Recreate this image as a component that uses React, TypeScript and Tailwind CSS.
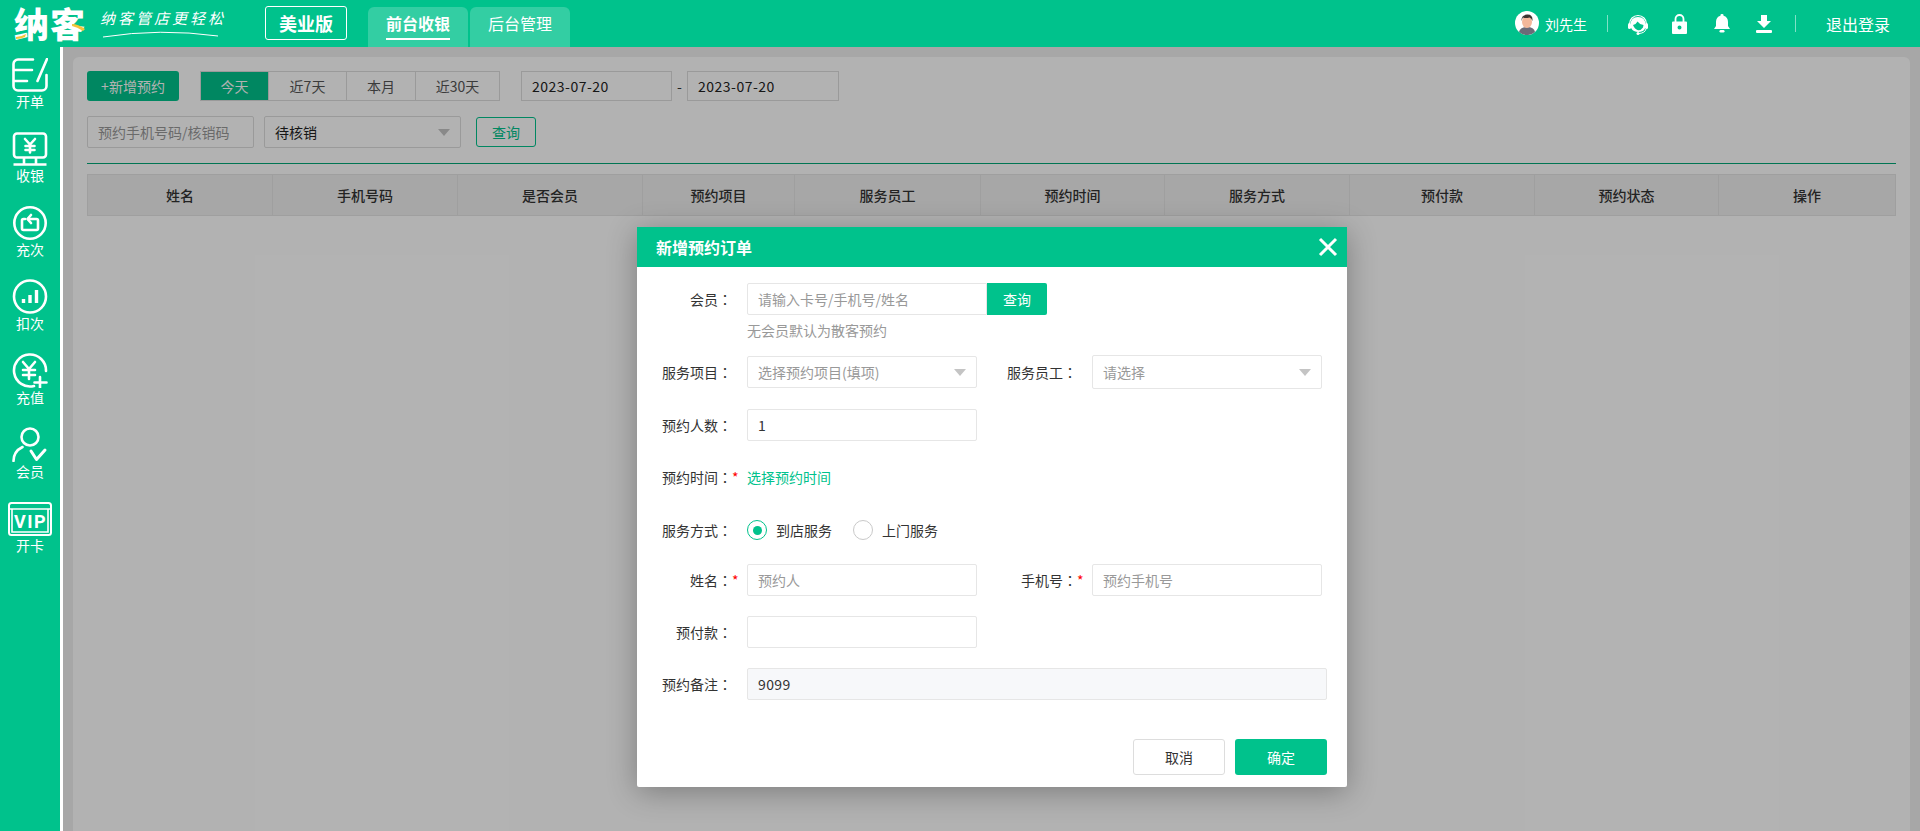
import React from "react";

const columns = [
  { label: "姓名", width: "w-[185px]" },
  { label: "手机号码", width: "w-[185px]" },
  { label: "是否会员", width: "w-[185px]" },
  { label: "预约项目", width: "w-[152px]" },
  { label: "服务员工", width: "w-[186px]" },
  { label: "预约时间", width: "w-[184px]" },
  { label: "服务方式", width: "w-[185px]" },
  { label: "预付款", width: "w-[185px]" },
  { label: "预约状态", width: "w-[184px]" },
  { label: "操作", width: "w-[176px]" },
];

const ranges = [
  { label: "今天", width: "w-[68px]", active: true },
  { label: "近7天", width: "w-[78px]", active: false },
  { label: "本月", width: "w-[69px]", active: false },
  { label: "近30天", width: "w-[83px]", active: false },
];

const Stroke = ({ w, h, children }: { w: number; h: number; children: React.ReactNode }) => (
  <svg width={w} height={h} viewBox={`0 0 ${w} ${h}`} fill="none" stroke="#fff" strokeWidth="2.6" strokeLinecap="round" strokeLinejoin="round" className="shrink-0">
    {children}
  </svg>
);

const navItems: { label: string; icon: React.ReactNode }[] = [
  {
    label: "开单",
    icon: (
      <Stroke w={36} h={34}>
        <path d="M21 1.500H6a4.500 4.500 0 0 0-4.500 4.500v22a4.500 4.500 0 0 0 4.500 4.500h24a4.500 4.500 0 0 0 4.500-4.500V17" />
        <path d="M2 12h18M2 23h13M35 1 25.500 23" />
      </Stroke>
    ),
  },
  {
    label: "收银",
    icon: (
      <Stroke w={36} h={34}>
        <rect x="2" y="1.500" width="32" height="24" rx="3" />
        <path d="M13 7l5 5.500 5-5.500M18 12.500v8M13.500 14h9M13.500 18h9" />
        <path d="M12 26v6M24 26v6M1.500 32.500h33" strokeLinecap="butt" />
      </Stroke>
    ),
  },
  {
    label: "充次",
    icon: (
      <Stroke w={36} h={34}>
        <circle cx="18" cy="17" r="15.700" />
        <path d="M13 13h-1.500a1.500 1.500 0 0 0-1.500 1.500v8a1.500 1.500 0 0 0 1.500 1.500h13a1.500 1.500 0 0 0 1.500-1.500v-8a1.500 1.500 0 0 0-1.500-1.500H16" />
        <path d="M19 9l-3.500 4 3.500 4" />
      </Stroke>
    ),
  },
  {
    label: "扣次",
    icon: (
      <Stroke w={36} h={35}>
        <circle cx="18" cy="17.500" r="16" />
        <path d="M11.500 20v4M18 16v8M24.500 11v13" strokeWidth="3.400" strokeLinecap="butt" />
      </Stroke>
    ),
  },
  {
    label: "充值",
    icon: (
      <Stroke w={36} h={35}>
        <path d="M22 33a16 16 0 1 1 12-15" />
        <path d="M11 9l6 7 6-7M17 16v10M11 17h12M11 22h12" />
        <path d="M28 24v11M22.500 29.500h12" />
      </Stroke>
    ),
  },
  {
    label: "会员",
    icon: (
      <Stroke w={36} h={35}>
        <circle cx="18" cy="10" r="8.500" />
        <path d="M1.500 34c0-6 3-11 9-14" />
        <path d="M19 24l5.500 8.500L33 23" strokeWidth="3" />
      </Stroke>
    ),
  },
  {
    label: "开卡",
    icon: (
      <svg width="44" height="34" viewBox="0 0 44 34" fill="none" className="shrink-0">
        <rect x="1" y="1" width="42" height="32" rx="2.500" stroke="#fff" strokeWidth="2" />
        <path d="M1 7h42M4 7v23h36V7" stroke="#fff" strokeWidth="1.600" />
        <text x="22.500" y="26" textAnchor="middle" fill="#fff" fontSize="18" fontWeight="700" letterSpacing="1.500" fontFamily="Roboto, sans-serif">VIP</text>
      </svg>
    ),
  },
];

const Triangle = () => (
  <span className="h-0 w-0 border-x-[6px] border-t-[7px] border-x-transparent border-t-[#c4c4c4]" />
);

const Label = ({ text, wide }: { text: string; wide?: boolean }) => (
  <span className={`shrink-0 text-right text-sm text-[#333] ${wide ? "w-[100px]" : "w-[95px]"}`}>
    {text}
    <span className="font-['Noto_Sans_CJK_TC',sans-serif]">：</span>
  </span>
);

const Field = ({ label, star, children, wide }: { label: string; star?: boolean; children: React.ReactNode; wide?: boolean }) => (
  <div className="flex items-center">
    <Label text={label} wide={wide} />
    <span className="w-[15px] shrink-0 text-sm leading-none text-[#f00]">{star ? "*" : ""}</span>
    {children}
  </div>
);

const inputBase = "h-[32px] shrink-0 rounded-[2px] border border-[#e6e6e6] px-[10px] text-sm text-[#333] outline-none placeholder:text-[#999]";

export default function App() {
  return (
    <div className="relative flex h-screen w-full flex-col overflow-hidden bg-white font-['Noto_Sans_CJK_SC','Liberation_Sans',sans-serif] text-[#333]">
      {/* top bar */}
      <header className="flex h-[47px] shrink-0 bg-[#00c28c] text-white">
        <div className="relative ml-[14px] mt-[3px] h-[40px] w-[76px] whitespace-nowrap text-[35px] font-black leading-[40px] tracking-[1px]">
          纳客
          <svg width="12" height="6" viewBox="0 0 12 6" className="absolute left-[2px] top-[30px]">
            <path d="M0 4q5 0 10-3l-1 3q-4 2-9 2z" fill="#f5c53a" />
          </svg>
          <svg width="14" height="8" viewBox="0 0 14 8" className="absolute left-[58px] top-[20px]">
            <path d="M0 1q6 0 13 5l-2 2Q5 4 0 3z" fill="#f5c53a" />
          </svg>
        </div>
        <div className="relative ml-[10px] mt-[8px] h-[32px] w-[126px]">
          <div className="whitespace-nowrap text-[15px] italic leading-[20px] tracking-[3px]">纳客管店更轻松</div>
          <svg width="126" height="14" viewBox="0 0 126 14" fill="none" className="absolute left-0 top-[19px]">
            <path d="M3 10Q60 1 118 9" stroke="#fff" strokeWidth="1" />
          </svg>
        </div>
        <div className="ml-[39px] mt-[6px] flex h-[34px] w-[82px] items-center justify-center rounded-[3px] border border-white text-[18px] font-bold">美业版</div>
        <nav className="ml-[21px] mt-[7px] flex gap-[2px]">
          <div className="flex h-[40px] w-[100px] justify-center rounded-t-[6px] bg-white/20">
            <span className="h-[33px] border-b-2 border-white text-base font-bold leading-[32px]">前台收银</span>
          </div>
          <div className="flex h-[40px] w-[100px] justify-center rounded-t-[6px] bg-white/20">
            <span className="text-base leading-[32px]">后台管理</span>
          </div>
        </nav>
        <div className="ml-auto flex items-center pr-[30px]">
          <svg width="24" height="24" viewBox="0 0 24 24" className="mb-[2px]">
            <circle cx="12" cy="12" r="12" fill="#fff" />
            <path d="M4 21q1-5 8-5t8 5a12 12 0 0 1-16 0z" fill="#6b6b78" />
            <ellipse cx="12" cy="11" rx="5" ry="6" fill="#f3b79a" />
            <path d="M6.500 10q-.5-6 5.500-6.500t5.500 6.500q-1-3-3-3.500-4 1-6.500 0-1 1-1.500 3.500z" fill="#3c3531" />
          </svg>
          <span className="ml-[6px] text-sm">刘先生</span>
          <span className="ml-[20px] h-[17px] w-px bg-white/50" />
          <svg width="20" height="22" viewBox="0 0 20 22" className="ml-[20px]">
            <path d="M1.500 11a8.500 8.500 0 0 1 17 0" fill="none" stroke="#fff" strokeWidth="1.200" />
            <path d="M2.500 12q0-8 7.500-8t7.500 8q0 4-2.500 6-5 2-9 0-3.500-2-3.500-6z" fill="#fff" />
            <path d="M5 12q3-.5 4.500-3.500 2 3 6 3.500l-.5 2.500q-2.500 3.500-5.500 2.500-3-1-4.500-5z" fill="#00c28c" />
            <rect x="0" y="10" width="3" height="6" rx="1.500" fill="#fff" />
            <rect x="17" y="10" width="3" height="6" rx="1.500" fill="#fff" />
            <path d="M18 16q-1 4-7 4.500" fill="none" stroke="#fff" strokeWidth="1" />
            <circle cx="10" cy="20.500" r="1.500" fill="#fff" />
          </svg>
          <svg width="15" height="20" viewBox="0 0 15 20" className="ml-[24px]">
            <path d="M3.500 9V5a4 4 0 0 1 8 0v4" fill="none" stroke="#fff" strokeWidth="1.800" />
            <path fillRule="evenodd" d="M1 7.500h13a1 1 0 0 1 1 1V19a1 1 0 0 1-1 1H1a1 1 0 0 1-1-1V8.500a1 1 0 0 1 1-1zM7.500 11.500a2 2 0 1 0 0 4 2 2 0 0 0 0-4z" fill="#fff" />
          </svg>
          <svg width="16" height="19" viewBox="0 0 16 19" className="ml-[27px]">
            <path d="M8 0a1.500 1.500 0 0 1 1.500 1.800Q14 3 14 8v4l2 3H0l2-3V8q0-5 4.500-6.200A1.500 1.500 0 0 1 8 0z" fill="#fff" />
            <rect x="5.500" y="16" width="5" height="2.500" rx="1.200" fill="#fff" />
          </svg>
          <svg width="16" height="18" viewBox="0 0 16 18" className="ml-[26px]">
            <path d="M5 0h6v6h4l-7 7-7-7h4z" fill="#fff" />
            <rect x="0" y="15" width="16" height="3" rx="1" fill="#fff" />
          </svg>
          <span className="ml-[23px] h-[17px] w-px bg-white/50" />
          <span className="ml-[30px] text-base">退出登录</span>
        </div>
      </header>

      <div className="flex min-h-0 flex-1">
        {/* sidebar */}
        <aside className="flex w-[60px] shrink-0 flex-col items-center bg-[#00c28c] pt-[11px] text-white">
          {navItems.map((item) => (
            <div key={item.label} className="flex h-[74px] w-full flex-col items-center">
              <div className="flex h-[34px] items-end justify-center">{item.icon}</div>
              <span className="text-sm leading-[18px]">{item.label}</span>
            </div>
          ))}
        </aside>

        {/* main */}
        <main className="ml-[3px] min-w-0 flex-1 bg-[#f0f0f0] pl-[10px] pr-[10px] pt-[10px]">
          <div className="h-full rounded-t-[6px] bg-white p-[14px]">
            <div className="flex items-center">
              <button className="h-[30px] w-[92px] rounded-[3px] bg-[#00c28c] text-sm text-white">+新增预约</button>
              <div className="ml-[21px] flex h-[30px] border border-[#ddd] text-sm">
                {ranges.map((range) => (
                  <span
                    key={range.label}
                    className={`flex items-center justify-center border-r border-[#ddd] last:border-r-0 ${range.width} ${range.active ? "bg-[#00c28c] text-white" : "text-[#555]"}`}
                  >
                    {range.label}
                  </span>
                ))}
              </div>
              <div className="ml-[21px] flex h-[30px] w-[151px] items-center border border-[#ddd] pl-[10px] text-sm tracking-[0.5px] text-[#222]">2023-07-20</div>
              <span className="w-[15px] text-center text-sm">-</span>
              <div className="flex h-[30px] w-[152px] items-center border border-[#ddd] pl-[10px] text-sm tracking-[0.5px] text-[#222]">2023-07-20</div>
            </div>
            <div className="mt-[15px] flex items-center">
              <input placeholder="预约手机号码/核销码" readOnly className="h-[32px] w-[167px] rounded-[2px] border border-[#ddd] px-[10px] text-sm outline-none placeholder:text-[#999]" />
              <div className="ml-[10px] flex h-[32px] w-[197px] items-center justify-between rounded-[2px] border border-[#ddd] pl-[10px] pr-[10px] text-sm text-[#222]">
                待核销
                <Triangle />
              </div>
              <button className="ml-[15px] h-[30px] w-[60px] rounded-[3px] border border-[#00c28c] text-sm text-[#00c28c]">查询</button>
            </div>
            <div className="mt-[15px] h-px bg-[#00a878]" />
            <div className="mt-[10px] flex h-[42px] border border-[#e4e4e4] bg-[#f0f0f0]">
              {columns.map((col) => (
                <div key={col.label} className={`flex shrink-0 items-center justify-center border-r border-[#e4e4e4] text-sm font-medium last:border-r-0 ${col.width}`}>
                  {col.label}
                </div>
              ))}
            </div>
          </div>
        </main>
      </div>

      {/* modal backdrop */}
      <div className="absolute bottom-0 left-[63px] right-0 top-[47px] bg-black/30" />

      <div className="absolute left-[637px] top-[227px] flex h-[560px] w-[710px] flex-col rounded-[2px] bg-white shadow-[0_5px_30px_rgba(0,0,0,0.3)]">
        <div className="flex h-[40px] shrink-0 items-center justify-between bg-[#00c28c] pl-[19px] pr-[9px] text-white">
          <span className="text-base font-bold">新增预约订单</span>
          <svg width="20" height="20" viewBox="0 0 20 20" stroke="#fff" strokeWidth="3">
            <path d="M2 2l16 16M18 2 2 18" />
          </svg>
        </div>
        <div className="flex flex-1 flex-col pt-[16px]">
          <Field label="会员">
            <input placeholder="请输入卡号/手机号/姓名" readOnly className={`${inputBase} w-[240px] rounded-r-none`} />
            <button className="h-[32px] w-[60px] shrink-0 rounded-r-[2px] bg-[#00c28c] text-sm text-white">查询</button>
          </Field>
          <div className="ml-[110px] mt-[5px] text-sm leading-[20px] text-[#999]">无会员默认为散客预约</div>

          <div className="mt-[15px] flex items-center">
            <Field label="服务项目">
              <div className={`${inputBase} flex w-[230px] items-center justify-between text-[#999]`}>
                选择预约项目(填项)
                <Triangle />
              </div>
            </Field>
            <Field label="服务员工" wide>
              <div className="flex h-[34px] w-[230px] shrink-0 items-center justify-between rounded-[2px] border border-[#e6e6e6] px-[10px] text-sm text-[#999]">
                请选择
                <Triangle />
              </div>
            </Field>
          </div>

          <div className="mt-[20px]">
            <Field label="预约人数">
              <input defaultValue="1" className={`${inputBase} w-[230px]`} />
            </Field>
          </div>

          <div className="mt-[20px] h-[32px]">
            <Field label="预约时间" star>
              <span className="h-[32px] text-sm leading-[32px] text-[#00c28c]">选择预约时间</span>
            </Field>
          </div>

          <div className="mt-[21px] h-[32px]">
            <Field label="服务方式">
              <div className="flex h-[32px] items-center text-sm">
                <span className="flex h-[20px] w-[20px] items-center justify-center rounded-full border-[1.5px] border-[#00c28c]">
                  <span className="h-[9px] w-[9px] rounded-full bg-[#00c28c]" />
                </span>
                <span className="ml-[9px]">到店服务</span>
                <span className="ml-[21px] h-[20px] w-[20px] rounded-full border-[1.5px] border-[#c9c9c9]" />
                <span className="ml-[9px]">上门服务</span>
              </div>
            </Field>
          </div>

          <div className="mt-[18px] flex">
            <Field label="姓名" star>
              <input placeholder="预约人" readOnly className={`${inputBase} w-[230px]`} />
            </Field>
            <Field label="手机号" star wide>
              <input placeholder="预约手机号" readOnly className={`${inputBase} w-[230px]`} />
            </Field>
          </div>

          <div className="mt-[20px]">
            <Field label="预付款">
              <input className={`${inputBase} w-[230px]`} readOnly />
            </Field>
          </div>

          <div className="mt-[20px]">
            <Field label="预约备注">
              <input defaultValue="9099" className={`${inputBase} w-[580px] bg-[#f7f8fa] tracking-[0.4px]`} />
            </Field>
          </div>

          <div className="mr-[20px] mt-[39px] flex justify-end gap-[10px]">
            <button className="h-[36px] w-[92px] rounded-[3px] border border-[#ddd] bg-white text-sm text-[#333]">取消</button>
            <button className="h-[36px] w-[92px] rounded-[3px] bg-[#00c28c] text-sm text-white">确定</button>
          </div>
        </div>
      </div>
    </div>
  );
}
